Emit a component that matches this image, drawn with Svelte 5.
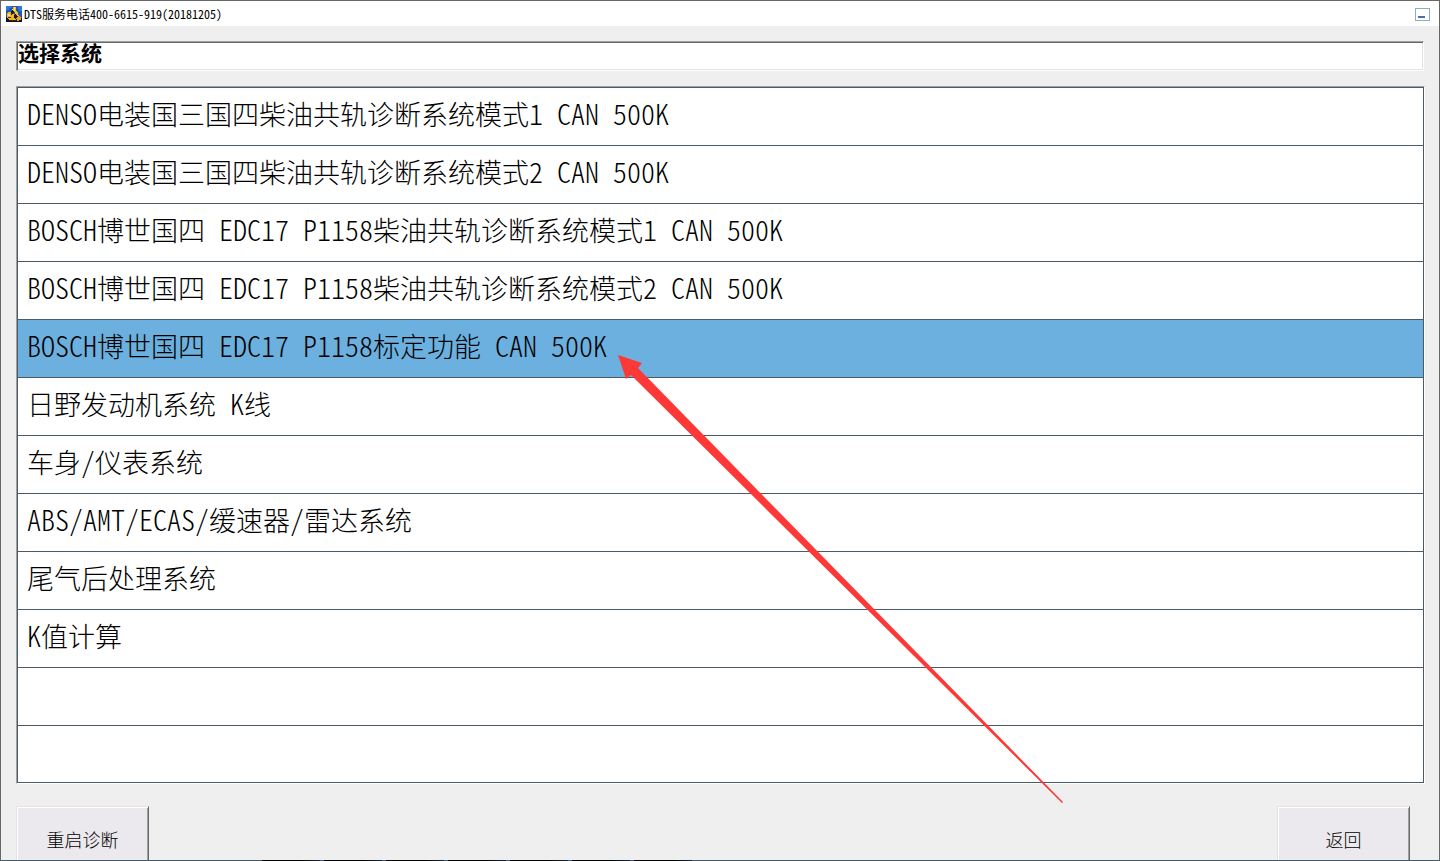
<script lang="ts">
  // Menu rows, blank ones keep the grid filled
  const ROW_COUNT = 12;
  const systems = [
    'DENSO电装国三国四柴油共轨诊断系统模式1 CAN 500K',
    'DENSO电装国三国四柴油共轨诊断系统模式2 CAN 500K',
    'BOSCH博世国四 EDC17 P1158柴油共轨诊断系统模式1 CAN 500K',
    'BOSCH博世国四 EDC17 P1158柴油共轨诊断系统模式2 CAN 500K',
    'BOSCH博世国四 EDC17 P1158标定功能 CAN 500K',
    '日野发动机系统 K线',
    '车身/仪表系统',
    'ABS/AMT/ECAS/缓速器/雷达系统',
    '尾气后处理系统',
    'K值计算',
  ];
  const rows = Array.from({ length: ROW_COUNT }, (_, i) => systems[i] ?? '');

  let selected = $state(4);

  // Split into latin and chinese runs, latin is set one size larger
  function runs(text: string): string[] {
    return text.match(/[\x20-\x7e]+|[^\x20-\x7e]+/g) ?? [];
  }

  function isLatin(run: string): boolean {
    return run.charCodeAt(0) < 127;
  }
</script>

<div class="window">
  <header class="titlebar">
    <svg class="app-icon" viewBox="0 0 16 16" shape-rendering="crispEdges" aria-hidden="true">
      <rect width="16" height="16" fill="#2458b8" />
      <path d="M0 0h6v2H3v2H0zM12 0h4v5h-3z" fill="#2f78dc" />
      <path d="M0 11h2l3-4 3 2h4l4 3v4H0z" fill="#0e1428" />
      <path d="M7 1h3v3l2 3 1 3h-2L9 7 8 5H6z" fill="#f8c020" />
      <path d="M1 7l2-1 3 1 2 2v3l2 1-2 2-4-1-3-2z" fill="#f2b41c" />
      <path d="M10 11l3-1 2 2v2l-4 1z" fill="#e8a81c" />
      <path d="M5 5l2-2 1 3-2 3H5zM9 8l3 3-2 1-1-1z" fill="#2a1a10" />
      <path d="M8 1h1v4H8zM2 8h2v2H2z" fill="#ffe678" />
      <path d="M2 11h3v1H2zM4 14h7v1H4z" fill="#3a2508" />
    </svg>
    <span class="caption">DTS服务电话400-6615-919(20181205)</span>
    <button class="minimize" aria-label="最小化"></button>
  </header>

  <main class="content">
    <h1 class="heading">选择系统</h1>

    <ul class="list">
      {#each rows as text, i}
        <li>
          <button
            class="row"
            class:selected={selected === i}
            disabled={!text}
            onclick={() => (selected = i)}
          >
            {#each runs(text) as run}<span class:latin={isLatin(run)}>{run}</span>{/each}
          </button>
        </li>
      {/each}
    </ul>

    <div class="actions">
      <button class="action">重启诊断</button>
      <button class="action">返回</button>
    </div>
  </main>

  <div class="edge"></div>

  <svg class="arrow" viewBox="0 0 446 449" aria-hidden="true">
    <path d="M0 0L24 8L20 13L445 447L444 448L13 20L8 24Z" fill="#fd3938" />
  </svg>
</div>

<style>
  :global(body) {
    background: #efefef;
  }

  .window {
    position: relative;
    box-sizing: border-box;
    height: 100vh;
    display: flex;
    flex-direction: column;
    overflow: hidden;
    border: 1px solid #666;
    border-bottom: none;
    background: #efefef;
    color: #000;
    font-family: 'Noto Sans CJK SC', sans-serif;
    font-weight: 300;
    font-feature-settings: 'hwid' 1;
  }

  button {
    font: inherit;
    font-feature-settings: inherit;
    color: inherit;
  }

  .titlebar {
    flex: none;
    box-sizing: border-box;
    display: flex;
    align-items: flex-start;
    height: 25px;
    padding: 5px 9px 0 5px;
    background: #fff;
  }

  .app-icon {
    width: 16px;
    height: 16px;
    margin-right: 2px;
  }

  .caption {
    flex: 1;
    font-size: 12px;
    line-height: 16px;
    font-weight: 400;
  }

  .minimize {
    display: flex;
    align-items: flex-end;
    width: 15px;
    height: 13px;
    margin: 2px 0 0;
    padding: 2px;
    border: 1px solid #8aafc4;
    background: #fff;
  }

  .minimize::before {
    content: '';
    width: 7px;
    height: 2px;
    background: #4a6ea9;
  }

  .content {
    flex: 1;
    min-height: 0;
    padding: 15px 14px 0 15px;
  }

  .heading {
    box-sizing: border-box;
    height: 30px;
    margin: 0 1px 15px 0;
    padding: 0 1px;
    border: 1px solid;
    border-color: #a0a0a0 #fff #fff #a0a0a0;
    box-shadow: inset 1px 1px #696969, inset -1px -1px #e3e3e3;
    background: #fff;
    font-size: 21px;
    line-height: 20px;
    font-weight: 700;
  }

  .list {
    margin: 0;
    padding: 0;
    list-style: none;
    border: 1px solid;
    border-color: #a0a0a0 #fff #fff #a0a0a0;
    background: #fff;
  }

  .row {
    display: block;
    box-sizing: border-box;
    width: 100%;
    height: 58px;
    padding: 0 9px 6px;
    border: 1px solid #4d5b67;
    border-bottom: none;
    background: #fff;
    font-size: 27px;
    line-height: 50px;
    text-align: left;
    white-space: pre;
  }

  li:last-child .row {
    border-bottom: 1px solid #4d5b67;
  }

  .row.selected {
    background: #6bb0de;
  }

  .latin {
    font-size: 28px;
  }

  .actions {
    display: flex;
    justify-content: space-between;
    padding: 22px 15px 0 0;
  }

  .action {
    width: 133px;
    height: 66px;
    padding: 0;
    border: 1px solid;
    border-color: #e3e3e3 #696969 #696969 #e3e3e3;
    box-shadow: inset 1px 1px #fff, inset -1px -1px #a0a0a0;
    background: #ebe9ed;
    font-size: 18px;
  }

  /* Strip of the taskbar showing under the window */
  .edge {
    flex: none;
    height: 1px;
    padding-left: 261px;
    background: #46586a;
  }

  .edge::before {
    content: '';
    display: block;
    width: 430px;
    height: 1px;
    background: repeating-linear-gradient(90deg, #050505 0 40px, #1b2733 58px, #46586a 58px 62px);
  }

  .arrow {
    position: absolute;
    left: 617px;
    top: 354px;
    width: 446px;
    height: 449px;
    pointer-events: none;
  }
</style>
